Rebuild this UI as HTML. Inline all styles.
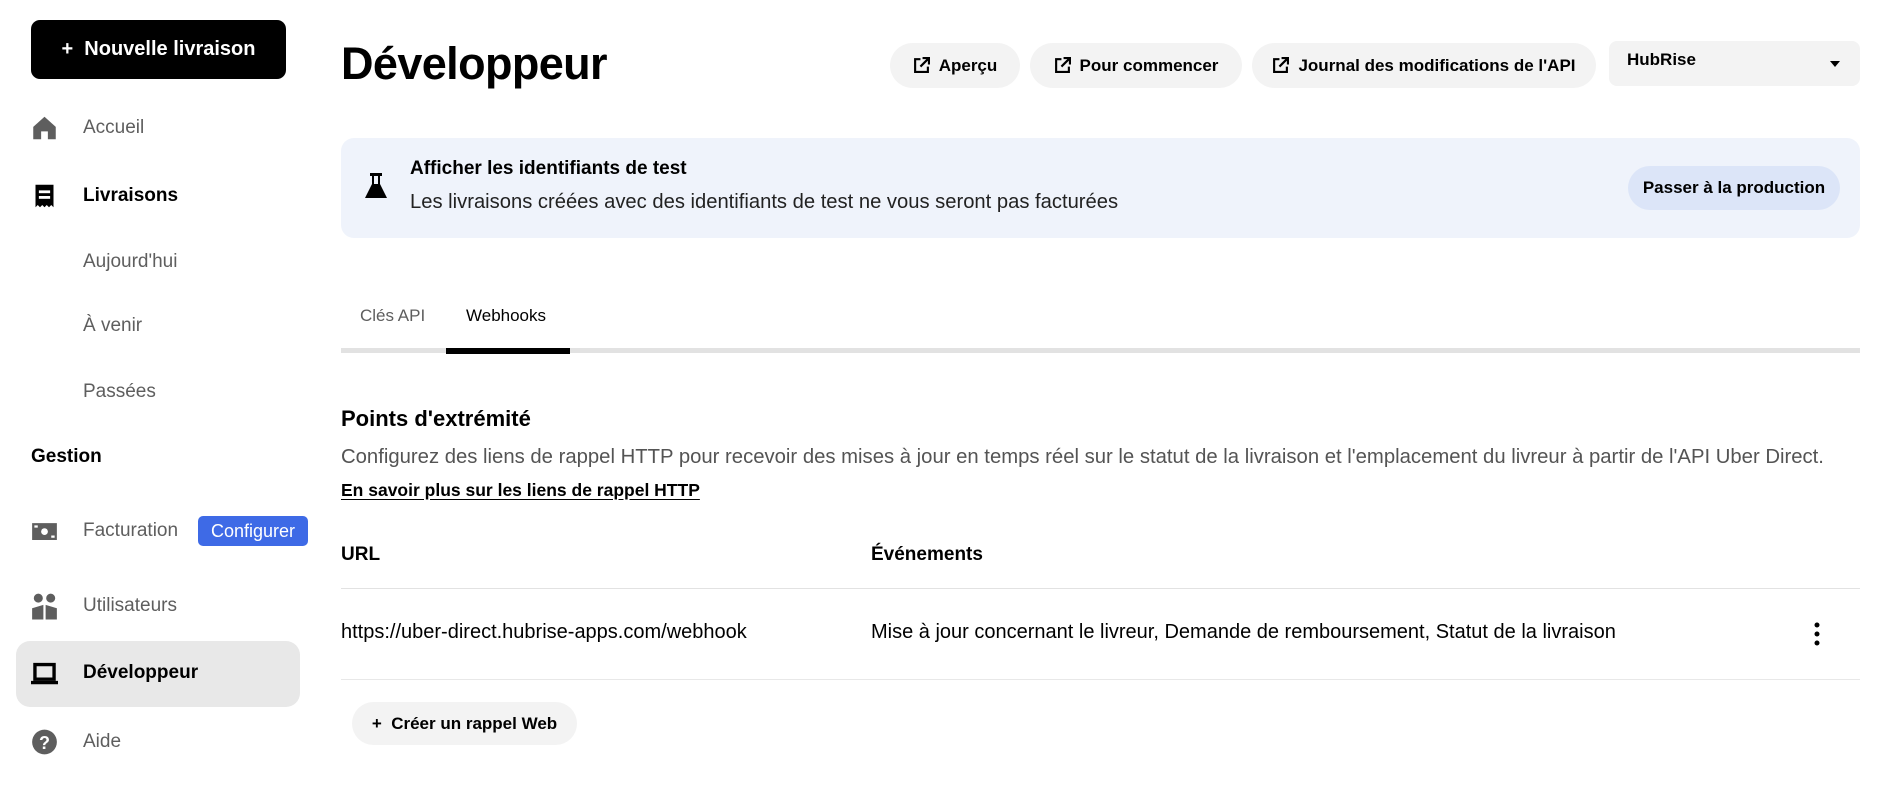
<!DOCTYPE html>
<html><head><meta charset="utf-8">
<style>
*{box-sizing:border-box;margin:0;padding:0}
body{width:1882px;height:793px;overflow:hidden;background:#fff;font-family:"Liberation Sans",sans-serif;color:#000;position:relative}
.a{position:absolute;white-space:nowrap}
.nav{font-size:19px;color:#5e5e5e;left:83px;transform:translateY(-50%)}
.ic{position:absolute;left:31px;width:27px;height:27px;transform:translateY(-50%)}
.btn{position:absolute;background:#f3f3f3;border-radius:24px;font-size:17px;font-weight:bold;display:flex;align-items:center;justify-content:center;gap:9px}
.ext{width:17px;height:17px}
</style></head><body>

<div class="a" style="left:31px;top:20px;width:255px;height:59px;background:#000;border-radius:9px;color:#fff;font-size:20px;font-weight:bold;display:flex;align-items:center;justify-content:center">+&nbsp;&nbsp;Nouvelle livraison</div>

<svg class="ic" style="top:128px" viewBox="0 0 24 24"><path d="M12 2L2 11v11h7v-7h6v7h7V11z" fill="#5e5e5e"/></svg>
<div class="a nav" style="top:128px">Accueil</div>
<svg class="ic" style="top:196px" viewBox="0 0 24 24"><path d="M4 2h16v20l-2-2-2 2-2-2-2 2-2-2-2 2-2-2-2 2z" fill="#000"/><rect x="7" y="7" width="10" height="2.5" fill="#fff"/><rect x="7" y="12" width="10" height="2.5" fill="#fff"/></svg>
<div class="a nav" style="top:196px;color:#000;font-weight:bold">Livraisons</div>
<div class="a nav" style="top:262px">Aujourd'hui</div>
<div class="a nav" style="top:326px">À venir</div>
<div class="a nav" style="top:392px">Passées</div>
<div class="a nav" style="top:457px;left:31px;color:#000;font-weight:bold">Gestion</div>
<svg class="ic" style="top:531px" viewBox="0 0 24 24"><rect x="1" y="5" width="22" height="15" fill="#5e5e5e"/><circle cx="12" cy="12.5" r="3" fill="#fff"/><rect x="3" y="7" width="3" height="2" fill="#fff"/><rect x="18" y="16" width="3" height="2" fill="#fff"/></svg>
<div class="a nav" style="top:531px">Facturation</div>
<div class="a" style="left:198px;top:516px;width:110px;height:30px;background:#3e6ae6;border-radius:5px;color:#fff;font-size:18px;display:flex;align-items:center;justify-content:center">Configurer</div>
<svg class="ic" style="top:606px" viewBox="0 0 24 24"><circle cx="6.5" cy="5" r="4" fill="#5e5e5e"/><circle cx="17.5" cy="5" r="4" fill="#5e5e5e"/><path d="M1 24V14l10-3v13zM13 24V11l10 3v10z" fill="#5e5e5e"/></svg>
<div class="a nav" style="top:606px">Utilisateurs</div>
<div class="a" style="left:16px;top:641px;width:284px;height:66px;background:#e8e8e8;border-radius:14px"></div>
<svg class="ic" style="top:673px" viewBox="0 0 24 24"><rect x="3.5" y="4.5" width="17" height="13" fill="none" stroke="#000" stroke-width="3"/><rect x="0" y="19" width="24" height="3" fill="#000"/></svg>
<div class="a nav" style="top:673px;color:#000;font-weight:bold">Développeur</div>
<svg class="ic" style="top:742px" viewBox="0 0 24 24"><circle cx="12" cy="12" r="11" fill="#5e5e5e"/><text x="12" y="18" font-size="16" font-weight="bold" text-anchor="middle" fill="#fff" font-family="Liberation Sans">?</text></svg>
<div class="a nav" style="top:742px">Aide</div>

<div class="a" style="left:341px;top:38px;font-size:45px;font-weight:bold;letter-spacing:-0.6px">Développeur</div>

<div class="btn" style="left:890px;top:43px;width:130px;height:45px"><svg class="ext" viewBox="0 0 16 16"><path d="M7 2H2v12h12V9" fill="none" stroke="#000" stroke-width="2"/><path d="M9 1h6v6M15 1L7 9" fill="none" stroke="#000" stroke-width="2"/></svg>Aperçu</div>
<div class="btn" style="left:1030px;top:43px;width:212px;height:45px"><svg class="ext" viewBox="0 0 16 16"><path d="M7 2H2v12h12V9" fill="none" stroke="#000" stroke-width="2"/><path d="M9 1h6v6M15 1L7 9" fill="none" stroke="#000" stroke-width="2"/></svg>Pour commencer</div>
<div class="btn" style="left:1252px;top:43px;width:344px;height:45px"><svg class="ext" viewBox="0 0 16 16"><path d="M7 2H2v12h12V9" fill="none" stroke="#000" stroke-width="2"/><path d="M9 1h6v6M15 1L7 9" fill="none" stroke="#000" stroke-width="2"/></svg>Journal des modifications de l'API</div>
<div class="a" style="left:1609px;top:41px;width:251px;height:45px;background:#f3f3f3;border-radius:8px;font-size:17px;font-weight:bold;padding:9px 18px">HubRise<span style="position:absolute;right:20px;top:20px;border-left:5px solid transparent;border-right:5px solid transparent;border-top:6px solid #000"></span></div>

<div class="a" style="left:341px;top:138px;width:1519px;height:100px;background:#eff3fb;border-radius:13px"></div>
<svg class="a" style="left:364px;top:172px;width:24px;height:28px" viewBox="0 0 24 28"><rect x="6" y="1" width="12" height="3" fill="#000"/><path d="M8 4h8v8l7 14H1l7-14z" fill="#000"/><rect x="10" y="4" width="4" height="8" fill="#eff3fb"/></svg>
<div class="a" style="left:410px;top:158px;font-size:19px;font-weight:bold">Afficher les identifiants de test</div>
<div class="a" style="left:410px;top:191px;font-size:20.2px;color:#222">Les livraisons créées avec des identifiants de test ne vous seront pas facturées</div>
<div class="btn" style="left:1628px;top:166px;width:212px;height:44px;background:#dce5f8">Passer à la production</div>

<div class="a" style="left:360px;top:306px;font-size:17px;color:#5e5e5e">Clés API</div>
<div class="a" style="left:466px;top:306px;font-size:17px">Webhooks</div>
<div class="a" style="left:341px;top:348px;width:1519px;height:5px;background:#e2e2e2"></div>
<div class="a" style="left:446px;top:348px;width:124px;height:6px;background:#000"></div>

<div class="a" style="left:341px;top:406px;font-size:22px;font-weight:bold">Points d'extrémité</div>
<div class="a" style="left:341px;top:446px;font-size:20.3px;color:#545454">Configurez des liens de rappel HTTP pour recevoir des mises à jour en temps réel sur le statut de la livraison et l'emplacement du livreur à partir de l'API Uber Direct.</div>
<div class="a" style="left:341px;top:480px;font-size:17.5px;font-weight:bold;text-decoration:underline;text-underline-offset:3px">En savoir plus sur les liens de rappel HTTP</div>

<div class="a" style="left:341px;top:544px;font-size:19px;font-weight:bold">URL</div>
<div class="a" style="left:871px;top:544px;font-size:19px;font-weight:bold">Événements</div>
<div class="a" style="left:341px;top:588px;width:1519px;height:1px;background:#e2e2e2"></div>
<div class="a" style="left:341px;top:621px;font-size:20px">https://uber-direct.hubrise-apps.com/webhook</div>
<div class="a" style="left:871px;top:621px;font-size:20px">Mise à jour concernant le livreur, Demande de remboursement, Statut de la livraison</div>
<svg class="a" style="left:1811px;top:621px;width:12px;height:26px" viewBox="0 0 12 26"><circle cx="6" cy="4" r="2.5"/><circle cx="6" cy="13" r="2.5"/><circle cx="6" cy="22" r="2.5"/></svg>
<div class="a" style="left:341px;top:679px;width:1519px;height:1px;background:#e8e8e8"></div>
<div class="btn" style="left:352px;top:702px;width:225px;height:43px">+&nbsp; Créer un rappel Web</div>
</body></html>
